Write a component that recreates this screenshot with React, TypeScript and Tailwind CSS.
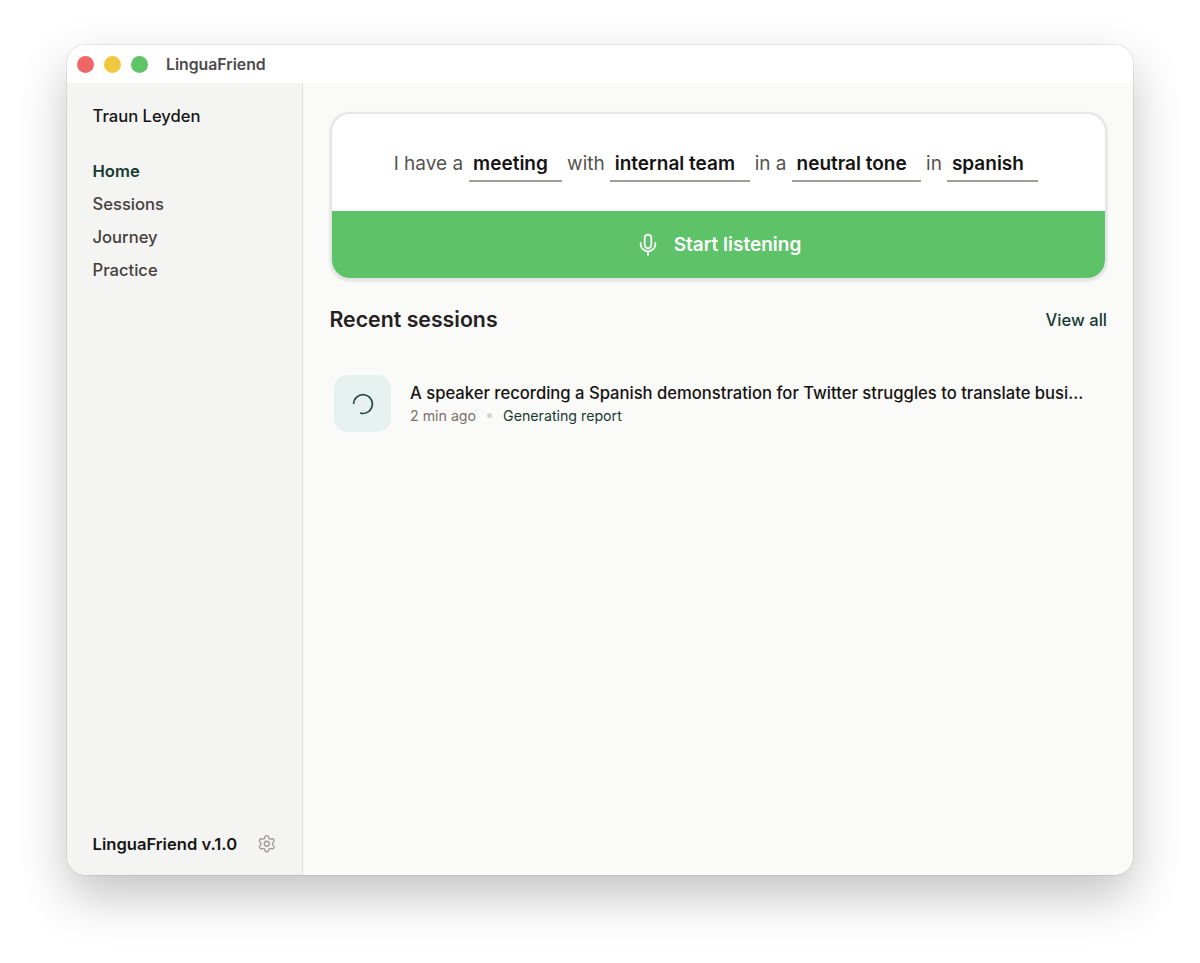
import { Settings } from "lucide-react";

const navItems = [
  { label: "Home", active: true },
  { label: "Sessions", active: false },
  { label: "Journey", active: false },
  { label: "Practice", active: false },
];

const prompt = [
  { lead: "I have a", value: "meeting", field: "w-[93.5px]" },
  { lead: "with", value: "internal team", field: "w-[139.5px]" },
  { lead: "in a", value: "neutral tone", field: "w-[129px]" },
  { lead: "in", value: "spanish", field: "w-[91px]" },
];

function MicIcon() {
  return (
    <svg viewBox="0 0 24 24" className="size-6" fill="none" stroke="currentColor" strokeWidth="1.75" strokeLinecap="round">
      <rect x="8.7" y="1.5" width="6.6" height="13.8" rx="3.3" />
      <path d="M4.6 9.8v1.1a7.4 7.4 0 0 0 14.8 0V9.8" />
      <path d="M12 18.5v3.8" />
    </svg>
  );
}

function TitleBar() {
  return (
    <header className="flex h-[38px] shrink-0 items-center bg-white pl-[10px]">
      <div className="flex gap-[10px]">
        <span className="size-[17px] rounded-full bg-[#ec6765]" />
        <span className="size-[17px] rounded-full bg-[#f1c840]" />
        <span className="size-[17px] rounded-full bg-[#5fc466]" />
      </div>
      <span className="ml-[18px] pt-px text-[15.8px] font-semibold text-[#4b4b4b]">LinguaFriend</span>
    </header>
  );
}

function Sidebar() {
  return (
    <aside className="flex w-[236px] shrink-0 flex-col border-r border-[#e0e0df] bg-[#f4f4f3] pr-[26px] pl-[25.5px]">
      <p className="mt-[21px] text-[16.6px] leading-6 font-medium text-[#161616]">Traun Leyden</p>
      <nav className="mt-[26.6px] flex flex-col">
        {navItems.map((item) => (
          <a
            key={item.label}
            className={`text-[16.6px] leading-[33.2px] ${item.active ? "font-semibold text-[#183a33]" : "font-medium text-[#45403d]"}`}
          >
            {item.label}
          </a>
        ))}
      </nav>
      <div className="mt-auto mb-[19px] flex items-center justify-between">
        <span className="text-[16.6px] leading-6 font-semibold text-[#161616]">LinguaFriend v.1.0</span>
        <Settings className="size-[19.5px] text-[#a09b97]" strokeWidth={1.7} />
      </div>
    </aside>
  );
}

function PromptCard() {
  return (
    <section className="overflow-hidden rounded-[20px] border-2 border-[#e5e5e8] bg-white shadow-[0_1px_3px_rgba(0,0,0,0.12)]">
      <div className="flex h-[97px] items-center justify-center gap-[5px] pr-[5px] text-[19px]">
        {prompt.map((part) => (
          <div key={part.value} className="flex items-center gap-[5.5px]">
            <span className="pt-[3px] text-[#57534e]">{part.lead}</span>
            <span className={`h-[39px] border-b-2 border-[#a29d99] pl-[4.5px] leading-[41px] font-semibold whitespace-nowrap text-[#161412] ${part.field}`}>
              {part.value}
            </span>
          </div>
        ))}
      </div>
      <button className="flex h-[67px] w-full items-center justify-center gap-[14px] bg-[#5ec269] text-[19px] font-semibold text-white">
        <MicIcon />
        <span className="pt-[2px]">Start listening</span>
      </button>
    </section>
  );
}

function Session() {
  return (
    <div className="mt-10 flex items-center gap-[19px] pl-1">
      <div className="flex size-[57px] shrink-0 items-center justify-center rounded-[14px] bg-[#e7f1f0]">
        <svg viewBox="0 0 24 24" className="size-6" fill="none" stroke="#24483f" strokeWidth="1.6">
          <path d="M2.6 12A9.4 9.4 0 1 1 9.2 21" />
        </svg>
      </div>
      <div>
        <p className="text-[16.62px] leading-6 font-medium whitespace-nowrap text-[#161412]">
          A speaker recording a Spanish demonstration for Twitter struggles to translate busi...
        </p>
        <div className="flex items-center text-[14.2px] leading-[22px]">
          <span className="text-[#79716b]">2 min ago</span>
          <span className="mx-[11px] size-[5px] rounded-full bg-[#d6d3d1]" />
          <span className="text-[#183a33]">Generating report</span>
        </div>
      </div>
    </div>
  );
}

export default function App() {
  return (
    <div className="h-[963px] w-[1200px] overflow-hidden bg-white px-[67px] pt-[45px] font-['Inter',sans-serif]">
      <div className="flex h-[830px] w-[1066px] flex-col overflow-hidden rounded-[19px] shadow-[0_0_0_1px_rgba(0,0,0,0.07),0_21px_50px_rgba(0,0,0,0.24)]">
        <TitleBar />
        <div className="flex min-h-0 flex-1">
          <Sidebar />
          <main className="min-w-0 flex-1 bg-[#fafaf8] pt-[29px] pr-[26px] pl-[27px]">
            <PromptCard />
            <div className="mt-[25px] flex items-center justify-between">
              <h2 className="-ml-[0.5px] pb-px text-[21.3px] leading-[29px] font-semibold text-[#25211f]">Recent sessions</h2>
              <a className="text-[16.6px] leading-6 font-medium text-[#183a33]">View all</a>
            </div>
            <Session />
          </main>
        </div>
      </div>
    </div>
  );
}
